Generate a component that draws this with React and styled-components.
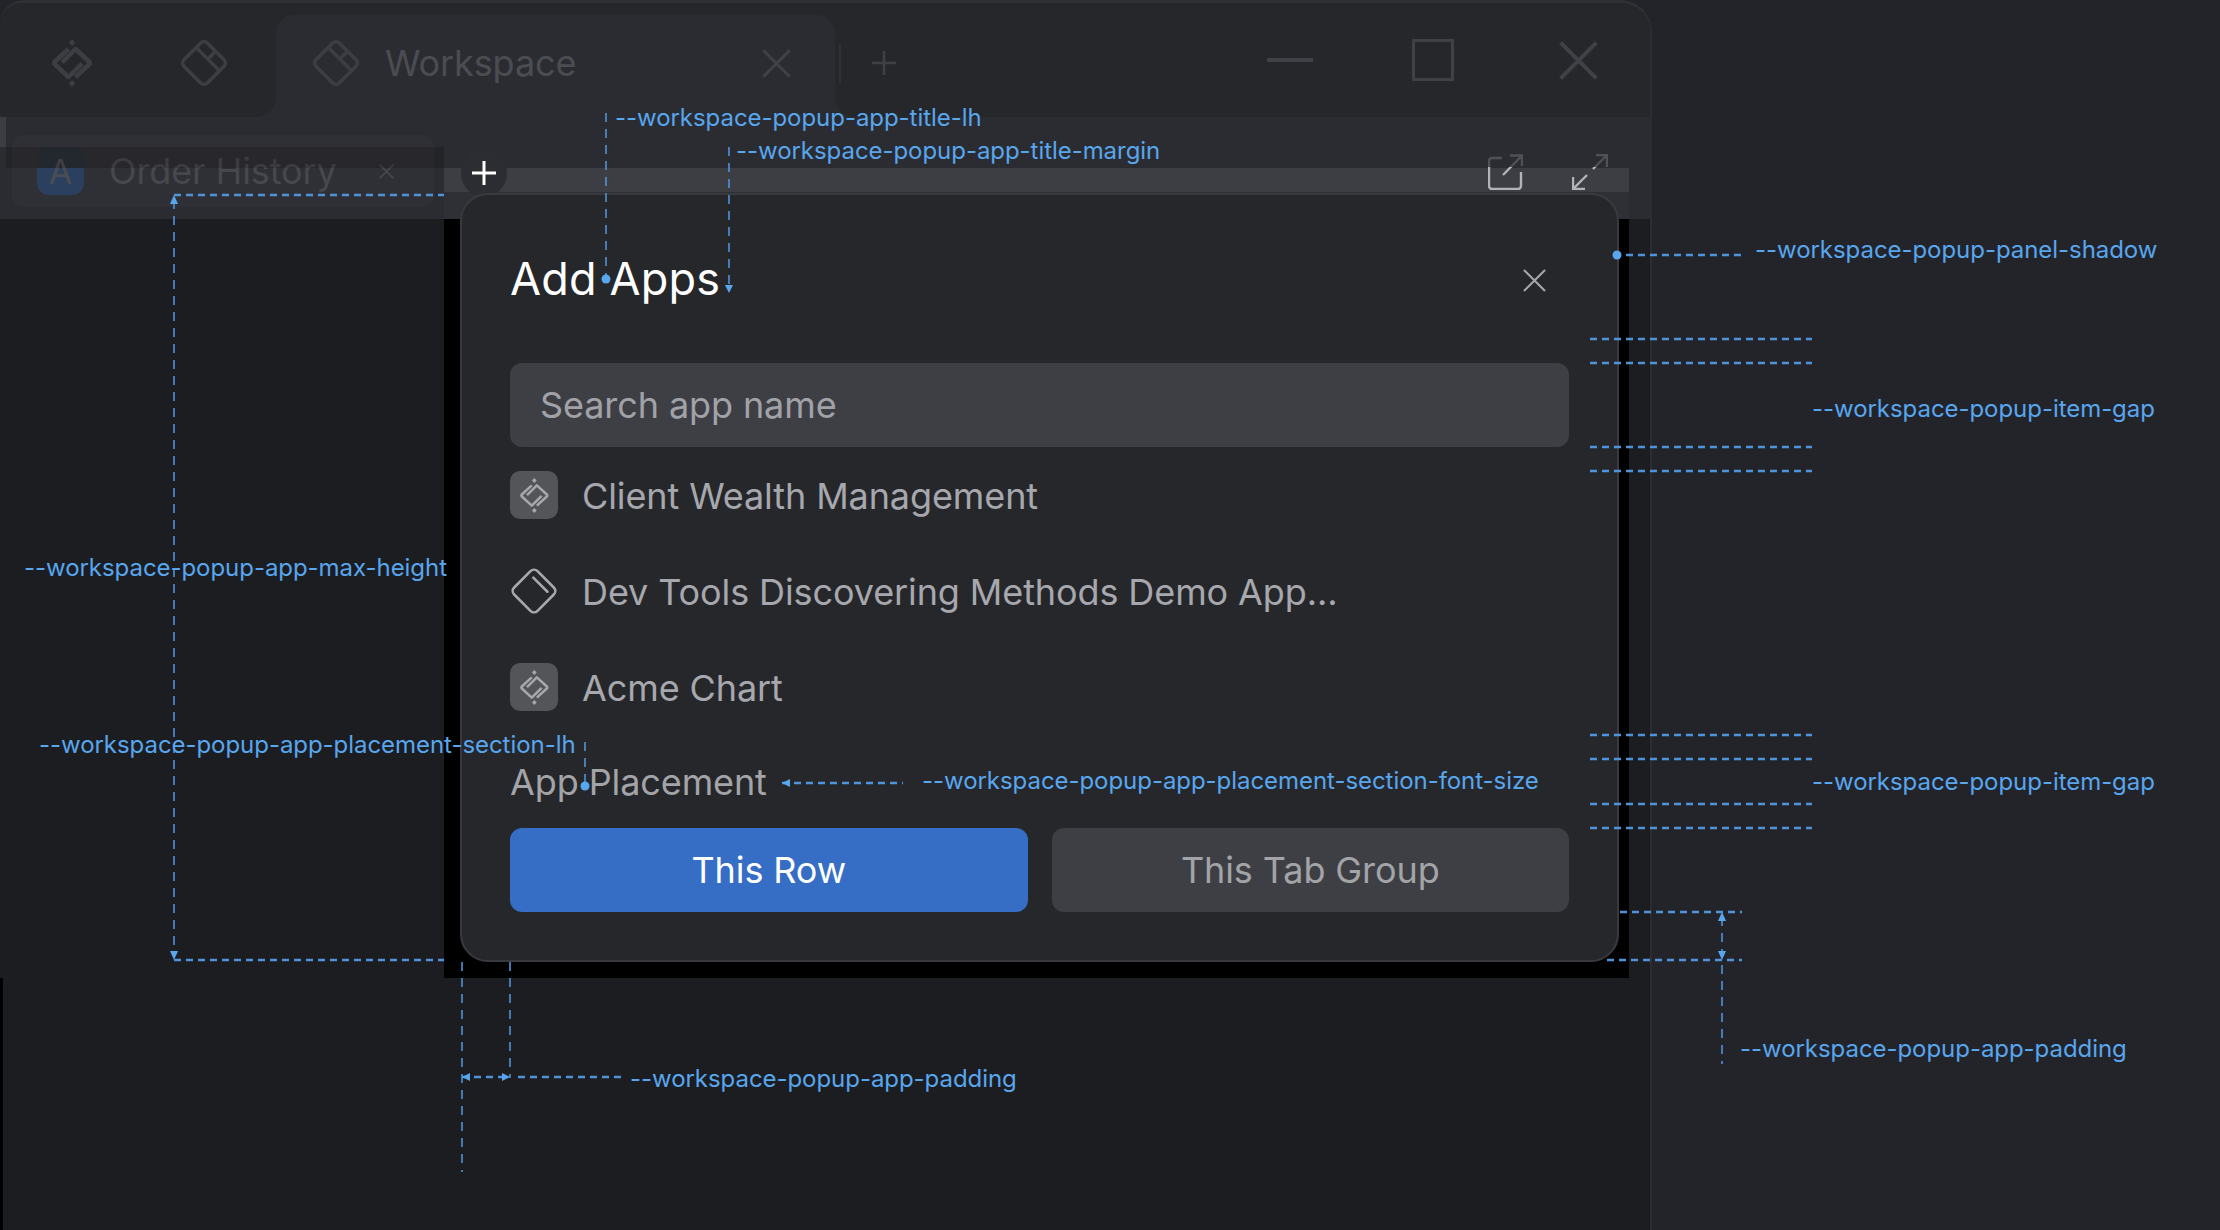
import React from 'react'
import styled, { createGlobalStyle } from 'styled-components'

const GlobalStyle = createGlobalStyle`
  html, body {
    margin: 0;
    padding: 0;
    background: #23242a;
  }

  #root {
    width: 2220px;
    height: 1230px;
    overflow: hidden;
  }

  * {
    box-sizing: border-box;
  }
`

const Page = styled.div`
  position: relative;
  width: 2220px;
  height: 1230px;
  background: #23242a;
  font-family: Inter, "Liberation Sans", sans-serif;
  letter-spacing: -0.1px;
`

const Window = styled.div`
  position: relative;
  display: flex;
  flex-direction: column;
  width: 1652px;
  height: 1230px;
  overflow: hidden;
  background: #1c1d21;
  border-top: 3px solid #2f3035;
  border-right: 2px solid #2c2d32;
  border-top-left-radius: 24px;
  border-top-right-radius: 32px;
`

const Header = styled.div`
  display: flex;
  flex: none;
  height: 114px;
  background: linear-gradient(#26272b 0 50%, #2b2c31 50%);
`

const HeaderLeft = styled.div`
  display: flex;
  align-items: center;
  gap: 88px;
  width: 276px;
  padding: 6px 0 0 51px;
  background: #26272b;
  border-bottom-right-radius: 20px;
`

const WorkspaceTab = styled.div`
  display: flex;
  align-items: center;
  width: 559px;
  margin-top: 12px;
  padding: 0 44px 6px 37px;
  background: #2b2c31;
  border-radius: 18px 18px 0 0;
  color: #4b4c51;
  font-size: 36px;
`

const TabLabel = styled.span`
  flex: 1;
  margin-left: 26px;
`

const HeaderRest = styled.div`
  display: flex;
  flex: 1;
  align-items: center;
  padding: 6px 52px 0 4px;
  background: #26272b;
  border-bottom-left-radius: 20px;
`

const Divider = styled.div`
  width: 2px;
  height: 39px;
  margin-right: 31px;
  background: #303136;
`

const WindowControls = styled.div`
  display: flex;
  align-items: center;
  gap: 99px;
  margin: 0 0 6px auto;
`

const WindowClose = styled.div`
  display: flex;
  margin-left: 6px;
`

const TabRow = styled.div`
  display: flex;
  flex: none;
  align-items: center;
  height: 102px;
  padding: 0 0 0 12px;
  background: #2b2c31;
`

const RowTab = styled.div`
  display: flex;
  align-items: center;
  width: 422px;
  height: 72px;
  margin-top: 6px;
  padding: 0 40px 0 25px;
  background: #2f3035;
  border-radius: 12px;
  color: #47484d;
  font-size: 36px;
`

const AppBadge = styled.div`
  display: flex;
  flex: none;
  align-items: center;
  justify-content: center;
  width: 47px;
  height: 48px;
  margin-right: 25px;
  background: linear-gradient(#2b3038 0 44%, #2a405e 44%);
  border-radius: 12px;
  color: #4c4d52;
  font-size: 34px;
`

const RowTabTitle = styled.span`
  flex: 1;
  white-space: nowrap;
`

const RowActions = styled.div`
  position: absolute;
  top: 151px;
  right: 42px;
  display: flex;
  gap: 49px;
`

const LeftNotch = styled.div`
  position: absolute;
  top: 114px;
  left: 0;
  width: 6px;
  height: 30px;
  background: #3c3d42;
`

const DarkBand = styled.div`
  position: absolute;
  top: 144px;
  left: 6px;
  width: 438px;
  height: 21px;
  background: rgba(0, 0, 0, 0.17);
`

const LightStrip = styled.div`
  position: absolute;
  top: 165px;
  left: 444px;
  width: 1185px;
  height: 24px;
  background: #3d3e43;
`

const StripEdge = styled.div`
  position: absolute;
  top: 189px;
  left: 444px;
  width: 1185px;
  height: 27px;
  background: #2f3036;
`

const PanelShadow = styled.div`
  position: absolute;
  top: 216px;
  left: 444px;
  width: 1185px;
  height: 759px;
  background: #000;
`

const BottomEdge = styled.div`
  position: absolute;
  top: 975px;
  bottom: 0;
  left: 0;
  width: 3px;
  background: #000;
`

const PlusHalo = styled.div`
  position: absolute;
  top: 146px;
  left: 461px;
  display: flex;
  align-items: center;
  justify-content: center;
  width: 46px;
  height: 48px;
  background: #2c2d33;
  border-radius: 50%;
`

const Modal = styled.div`
  position: absolute;
  top: 193px;
  left: 460px;
  display: flex;
  flex-direction: column;
  width: 1159px;
  height: 769px;
  padding: 48px;
  background: #26272b;
  border: 2px solid #393a40;
  border-radius: 28px;
`

const ModalTitle = styled.h2`
  height: 72px;
  margin: 0 0 48px;
  color: #fff;
  font-size: 45px;
  font-weight: 400;
  line-height: 72px;
  letter-spacing: 0.2px;
`

const CloseButton = styled.div`
  position: absolute;
  top: 74px;
  right: 71px;
  display: flex;
`

const SearchField = styled.div`
  display: flex;
  flex: none;
  align-items: center;
  height: 84px;
  margin-bottom: 24px;
  padding-left: 30px;
  background: #3e3f44;
  border-radius: 12px;
  color: #a0a2a8;
  font-size: 36px;
`

const AppList = styled.div`
  display: flex;
  flex-direction: column;
  gap: 48px;
  margin-bottom: 48px;
`

const AppRow = styled.div`
  display: flex;
  align-items: center;
  gap: 24px;
  height: 48px;
  color: #a6a8ae;
  font-size: 36px;
`

const AppName = styled.span`
  margin-top: 2px;
`

const AppTile = styled.div`
  display: flex;
  flex: none;
  align-items: center;
  justify-content: center;
  width: 48px;
  height: 48px;
  background: ${props => (props.$plain ? 'transparent' : '#545559')};
  border-radius: 10px;
`

const SectionLabel = styled.div`
  height: 45px;
  margin-bottom: 24px;
  color: #a3a4a8;
  font-size: 36px;
  line-height: 47px;
`

const ButtonRow = styled.div`
  display: grid;
  grid-template-columns: 1fr 1fr;
  gap: 24px;
`

const PlacementButton = styled.div`
  display: flex;
  align-items: center;
  justify-content: center;
  height: 84px;
  background: ${props => (props.$active ? '#366ec6' : '#3e3f44')};
  border-radius: 12px;
  color: ${props => (props.$active ? '#fff' : '#a3a4a8')};
  font-size: 36px;
`

const Guides = styled.svg`
  position: absolute;
  top: 0;
  left: 0;
  width: 2220px;
  height: 1230px;
  pointer-events: none;
`

const Note = styled.span`
  position: absolute;
  top: ${props => props.$y - 15}px;
  left: ${props => props.$x}px;
  color: #58a6ee;
  font-size: 24px;
  line-height: 30px;
  letter-spacing: -0.05px;
  white-space: nowrap;
`

const LogoGlyph = ({ size = 48, color = '#3d3e43', strokeWidth = 4.5 }) => (
  <svg width={size * 0.875} height={size} viewBox='0 0 42 48' fill='none'>
    <g stroke={color} strokeWidth={strokeWidth} strokeLinejoin='round'>
      <path d='M17.5 10 3.5 23Q3 24 3.5 25L17.5 38 31 24.5' />
      <path d='M24.5 38 38.5 25Q39 24 38.5 23L24.5 10 11 23.5' />
    </g>
    <g fill={color}>
      <path d='M21 0l3.2 3.5L21 7l-3.2-3.5z' />
      <path d='M21 41l3.2 3.5L21 48l-3.2-3.5z' />
    </g>
  </svg>
)

const WorkspaceGlyph = ({ size = 46, color = '#3d3e43' }) => (
  <svg width={size} height={size} viewBox='0 0 46 46' fill='none'>
    <g transform='rotate(45 23 23)' stroke={color} strokeWidth='3.5' strokeLinejoin='round'>
      <rect x='6.5' y='6.5' width='33' height='33' rx='5' />
      <path d='M6.5 17.5h33M23 6.5v11' />
    </g>
  </svg>
)

const TileGlyph = ({ size = 46, color = '#a6a8ae' }) => (
  <svg width={size} height={size} viewBox='0 0 46 46' fill='none'>
    <g transform='rotate(45 23 23)' stroke={color} strokeWidth='2.6' strokeLinejoin='round' strokeLinecap='round'>
      <rect x='6.5' y='6.5' width='33' height='33' rx='5' />
      <path d='M13 14h20' />
    </g>
  </svg>
)

const Cross = ({ size = 24, color = '#404146', strokeWidth = 2.5 }) => (
  <svg width={size} height={size} viewBox='0 0 24 24' fill='none'>
    <path d='M1 1l22 22M23 1 1 23' stroke={color} strokeWidth={strokeWidth} />
  </svg>
)

const Plus = ({ size = 24, color = '#404146', strokeWidth = 2.5 }) => (
  <svg width={size} height={size} viewBox='0 0 24 24' fill='none'>
    <path d='M12 0v24M0 12h24' stroke={color} strokeWidth={strokeWidth} />
  </svg>
)

const Minimize = () => (
  <svg width='46' height='4' viewBox='0 0 46 4'>
    <rect width='46' height='4' fill='#404146' />
  </svg>
)

const Maximize = () => (
  <svg width='42' height='42' viewBox='0 0 42 42' fill='none'>
    <rect x='1.5' y='1.5' width='39' height='39' stroke='#404146' strokeWidth='3' />
  </svg>
)

// lower half sits on the lit strip, upper half stays dimmed
const ActionStroke = ({ id }) => (
  <linearGradient id={id} gradientUnits='userSpaceOnUse' x1='0' y1='0' x2='0' y2='36'>
    <stop offset='0.36' stopColor='#505156' />
    <stop offset='0.36' stopColor='#b2b3b7' />
  </linearGradient>
)

const OpenExternal = () => (
  <svg width='35' height='36' viewBox='0 0 35 36' fill='none'>
    <defs>
      <ActionStroke id='openStroke' />
    </defs>
    <g stroke='url(#openStroke)' strokeWidth='2.4'>
      <path d='M14 4H4a3 3 0 0 0-3 3v25a3 3 0 0 0 3 3h26a3 3 0 0 0 3-3V18' />
      <path d='M15 21 33.5 2M22 1.5h12V12' />
    </g>
  </svg>
)

const Expand = () => (
  <svg width='36' height='36' viewBox='0 0 36 36' fill='none'>
    <defs>
      <ActionStroke id='expandStroke' />
    </defs>
    <g stroke='url(#expandStroke)' strokeWidth='2.4'>
      <path d='M21 15 35 1M24 1h11v12' />
      <path d='M15 21 1 35M1 23v12h12' />
    </g>
  </svg>
)

const apps = [
  { name: 'Client Wealth Management', tile: true },
  { name: 'Dev Tools Discovering Methods Demo App...', tile: false },
  { name: 'Acme Chart', tile: true }
]

const notes = [
  { x: 615, y: 118, text: '--workspace-popup-app-title-lh' },
  { x: 736, y: 151, text: '--workspace-popup-app-title-margin' },
  { x: 1755, y: 250, text: '--workspace-popup-panel-shadow' },
  { x: 1812, y: 409, text: '--workspace-popup-item-gap' },
  { x: 24, y: 568, text: '--workspace-popup-app-max-height' },
  { x: 39, y: 745, text: '--workspace-popup-app-placement-section-lh' },
  { x: 922, y: 781, text: '--workspace-popup-app-placement-section-font-size' },
  { x: 1812, y: 782, text: '--workspace-popup-item-gap' },
  { x: 630, y: 1079, text: '--workspace-popup-app-padding' },
  { x: 1740, y: 1049, text: '--workspace-popup-app-padding' }
]

const vertical = [
  [606, 113, 279],
  [729, 147, 288],
  [174, 200, 955],
  [585, 742, 782],
  [462, 962, 1172],
  [510, 962, 1078],
  [1722, 917, 1064]
]

const horizontal = [
  [174, 444, 195],
  [174, 444, 960],
  [782, 903, 783],
  [462, 510, 1077],
  [518, 622, 1077],
  [1620, 1742, 912],
  [1607, 1742, 960],
  [1626, 1741, 255],
  [1590, 1812, 339],
  [1590, 1812, 363],
  [1590, 1812, 447],
  [1590, 1812, 471],
  [1590, 1812, 735],
  [1590, 1812, 759],
  [1590, 1812, 804],
  [1590, 1812, 828]
]

const dots = [
  [606, 279],
  [585, 786],
  [1617, 255]
]

const arrows = [
  '729,293 725,285 733,285',
  '174,195 170,204 178,204',
  '174,960 170,951 178,951',
  '782,783 790,779 790,787',
  '462,1077 470,1073 470,1081',
  '510,1077 502,1073 502,1081',
  '1722,912 1718,921 1726,921',
  '1722,960 1718,951 1726,951'
]

const AnnotationLayer = () => (
  <>
    <Guides viewBox='0 0 2220 1230'>
      <g stroke='#4f93d9' fill='none'>
        {vertical.map(([x, y1, y2]) => (
          <line key={`v${x}${y1}`} x1={x} x2={x} y1={y1} y2={y2} strokeWidth='1.6' strokeDasharray='9 7' />
        ))}
        {horizontal.map(([x1, x2, y]) => (
          <line key={`h${x1}${y}`} x1={x1} x2={x2} y1={y} y2={y} strokeWidth='2.4' strokeDasharray='7 5' />
        ))}
      </g>
      <g fill='#58a6ee'>
        {dots.map(([cx, cy]) => (
          <circle key={`d${cx}`} cx={cx} cy={cy} r='4.5' />
        ))}
        {arrows.map(points => (
          <polygon key={points} points={points} />
        ))}
      </g>
    </Guides>
    {notes.map(note => (
      <Note key={`${note.x}${note.y}`} $x={note.x} $y={note.y}>
        {note.text}
      </Note>
    ))}
  </>
)

const App = () => (
  <Page>
    <GlobalStyle />
    <Window>
      <Header>
        <HeaderLeft>
          <LogoGlyph />
          <WorkspaceGlyph />
        </HeaderLeft>
        <WorkspaceTab>
          <WorkspaceGlyph />
          <TabLabel>Workspace</TabLabel>
          <Cross size={29} />
        </WorkspaceTab>
        <HeaderRest>
          <Divider />
          <Plus />
          <WindowControls>
            <Minimize />
            <Maximize />
            <WindowClose>
              <Cross size={39} />
            </WindowClose>
          </WindowControls>
        </HeaderRest>
      </Header>
      <TabRow>
        <RowTab>
          <AppBadge>A</AppBadge>
          <RowTabTitle>Order History</RowTabTitle>
          <Cross size={15} color='#47484d' />
        </RowTab>
      </TabRow>
      <LeftNotch />
      <DarkBand />
      <StripEdge />
      <LightStrip />
      <PanelShadow />
      <BottomEdge />
      <PlusHalo>
        <Plus color='#fff' strokeWidth={3} />
      </PlusHalo>
      <RowActions>
        <OpenExternal />
        <Expand />
      </RowActions>
    </Window>
    <Modal>
      <ModalTitle>Add Apps</ModalTitle>
      <CloseButton>
        <Cross size={23} color='#a5a6aa' strokeWidth={2.2} />
      </CloseButton>
      <SearchField>Search app name</SearchField>
      <AppList>
        {apps.map(app => (
          <AppRow key={app.name}>
            <AppTile $plain={!app.tile}>
              {app.tile ? <LogoGlyph size={35} color='#a6a8ae' strokeWidth={3.4} /> : <TileGlyph />}
            </AppTile>
            <AppName>{app.name}</AppName>
          </AppRow>
        ))}
      </AppList>
      <SectionLabel>App Placement</SectionLabel>
      <ButtonRow>
        <PlacementButton $active>This Row</PlacementButton>
        <PlacementButton>This Tab Group</PlacementButton>
      </ButtonRow>
    </Modal>
    <AnnotationLayer />
  </Page>
)

export default App
